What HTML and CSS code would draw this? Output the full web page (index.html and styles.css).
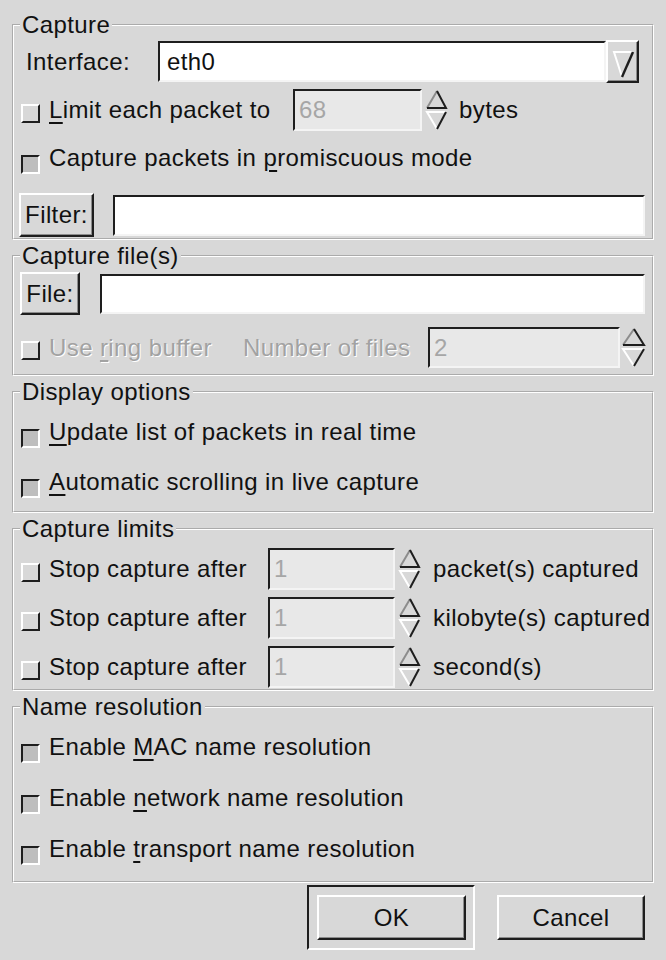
FILE: index.html
```html
<!DOCTYPE html>
<html lang="en">
<head>
    <meta charset="UTF-8">
    <title>Capture Options</title>
    <link rel="stylesheet" href="styles.css">
</head>
<body>
<div class="dialog">

    <fieldset class="frame capture-frame">
        <legend>Capture</legend>
        <div class="row iface-row">
            <span class="iface-label">Interface:</span>
            <div class="entry combo-entry">eth0</div>
            <div class="raised combo-btn">
                <svg width="29" height="39" viewBox="0 0 29 39">
                    <path d="M14 35 L6 10 H25" stroke="#fff" stroke-width="2" fill="none"/>
                    <path d="M25 10 L14 35" stroke="#1e1e1e" stroke-width="2.4" fill="none"/>
                </svg>
            </div>
        </div>
        <div class="row limit-row">
            <span class="check"></span>
            <span class="limit-label"><u>L</u>imit each packet to</span>
            <div class="entry off-entry limit-entry">68</div>
            <svg class="spin" width="24" height="42" viewBox="0 0 24 42">
                <path d="M3 19 L13 2" stroke="#8c8c8c" stroke-width="2" fill="none"/>
                <path d="M13 2 L22 19 H3" stroke="#1e1e1e" stroke-width="2" fill="none"/>
                <path d="M22 23 H3 L13 40" stroke="#fff" stroke-width="2" fill="none"/>
                <path d="M13 40 L22 23" stroke="#1e1e1e" stroke-width="2" fill="none"/>
            </svg>
            <span class="unit">bytes</span>
        </div>
        <div class="row promisc-row">
            <span class="check on"></span>
            <span>Capture packets in <u>p</u>romiscuous mode</span>
        </div>
        <div class="row filter-row">
            <button class="raised filter-btn">Filter:</button>
            <div class="entry filter-entry"></div>
        </div>
    </fieldset>

    <fieldset class="frame file-frame">
        <legend>Capture file(s)</legend>
        <div class="row file-row">
            <button class="raised file-btn">File:</button>
            <div class="entry file-entry"></div>
        </div>
        <div class="row ring-row">
            <span class="check"></span>
            <span class="off ring-label">Use <u>r</u>ing buffer</span>
            <span class="off files-label">Number of files</span>
            <div class="entry off-entry ring-entry">2</div>
            <svg class="spin ring-spin" width="26" height="41" viewBox="0 0 26 41">
                <path d="M3 18 L14 2" stroke="#8c8c8c" stroke-width="2" fill="none"/>
                <path d="M14 2 L24 18 H3" stroke="#1e1e1e" stroke-width="2" fill="none"/>
                <path d="M24 22 H3 L14 39" stroke="#fff" stroke-width="2" fill="none"/>
                <path d="M14 39 L24 22" stroke="#1e1e1e" stroke-width="2" fill="none"/>
            </svg>
        </div>
    </fieldset>

    <fieldset class="frame display-frame">
        <legend>Display options</legend>
        <div class="row check-row first">
            <span class="check on"></span>
            <span><u>U</u>pdate list of packets in real time</span>
        </div>
        <div class="row check-row">
            <span class="check on"></span>
            <span><u>A</u>utomatic scrolling in live capture</span>
        </div>
    </fieldset>

    <fieldset class="frame limits-frame">
        <legend>Capture limits</legend>
        <div class="row stop-row first">
            <span class="check"></span>
            <span class="stop-label">Stop capture after</span>
            <div class="entry off-entry stop-entry">1</div>
            <svg class="spin" width="24" height="42" viewBox="0 0 24 42">
                <path d="M3 19 L13 2" stroke="#8c8c8c" stroke-width="2" fill="none"/>
                <path d="M13 2 L22 19 H3" stroke="#1e1e1e" stroke-width="2" fill="none"/>
                <path d="M22 23 H3 L13 40" stroke="#fff" stroke-width="2" fill="none"/>
                <path d="M13 40 L22 23" stroke="#1e1e1e" stroke-width="2" fill="none"/>
            </svg>
            <span class="stop-unit">packet(s) captured</span>
        </div>
        <div class="row stop-row">
            <span class="check"></span>
            <span class="stop-label">Stop capture after</span>
            <div class="entry off-entry stop-entry">1</div>
            <svg class="spin" width="24" height="42" viewBox="0 0 24 42">
                <path d="M3 19 L13 2" stroke="#8c8c8c" stroke-width="2" fill="none"/>
                <path d="M13 2 L22 19 H3" stroke="#1e1e1e" stroke-width="2" fill="none"/>
                <path d="M22 23 H3 L13 40" stroke="#fff" stroke-width="2" fill="none"/>
                <path d="M13 40 L22 23" stroke="#1e1e1e" stroke-width="2" fill="none"/>
            </svg>
            <span class="stop-unit">kilobyte(s) captured</span>
        </div>
        <div class="row stop-row">
            <span class="check"></span>
            <span class="stop-label">Stop capture after</span>
            <div class="entry off-entry stop-entry">1</div>
            <svg class="spin" width="24" height="42" viewBox="0 0 24 42">
                <path d="M3 19 L13 2" stroke="#8c8c8c" stroke-width="2" fill="none"/>
                <path d="M13 2 L22 19 H3" stroke="#1e1e1e" stroke-width="2" fill="none"/>
                <path d="M22 23 H3 L13 40" stroke="#fff" stroke-width="2" fill="none"/>
                <path d="M13 40 L22 23" stroke="#1e1e1e" stroke-width="2" fill="none"/>
            </svg>
            <span class="stop-unit">second(s)</span>
        </div>
    </fieldset>

    <fieldset class="frame names-frame">
        <legend>Name resolution</legend>
        <div class="row name-row first">
            <span class="check on"></span>
            <span>Enable <u>M</u>AC name resolution</span>
        </div>
        <div class="row name-row">
            <span class="check on"></span>
            <span>Enable <u>n</u>etwork name resolution</span>
        </div>
        <div class="row name-row">
            <span class="check on"></span>
            <span>Enable <u>t</u>ransport name resolution</span>
        </div>
    </fieldset>

    <div class="actions">
        <div class="default-frame">
            <button class="raised action-btn ok-btn">OK</button>
        </div>
        <button class="raised action-btn cancel-btn">Cancel</button>
    </div>

</div>
</body>
</html>
```

FILE: styles.css
```css
body {
    margin: 0;
    background-color: #d8d8d8;
    color: #111;
    font-family: "Liberation Sans", Arial, sans-serif;
    font-size: 24px;
    letter-spacing: 0.4px;
    line-height: 28px;
}

.dialog {
    display: flex;
    flex-direction: column;
    gap: 2px;
    padding: 11px 12px 0 12px;
}

/* etched frames */
.frame {
    margin: 0;
    min-width: 0;
    border: 2px groove #fff;
    padding: 0 7px 0 6px;
}

legend {
    padding: 0 2px;
    height: 28px;
    line-height: 28px;
}

.row {
    display: flex;
    align-items: center;
}

.row > * {
    flex: none;
    white-space: nowrap;
}

u {
    text-decoration-thickness: 2px;
    text-underline-offset: 4px;
}

.off {
    color: #a2a2a2;
    text-shadow: 1px 1px 0 #fff;
}

/* widgets */
.check {
    box-sizing: border-box;
    width: 19px;
    height: 19px;
    margin: 6px 9px 0 1px;
    border: 2px solid;
    border-color: #fff #1e1e1e #1e1e1e #fff;
    background: #d8d8d8;
}

.check.on {
    margin-top: 12px;
    border-color: #1e1e1e #fff #fff #1e1e1e;
    background: #bebebe;
}

.entry {
    box-sizing: border-box;
    height: 41px;
    padding: 0 6px;
    border: 2px solid;
    border-color: #1e1e1e #f4f4f4 #f4f4f4 #1e1e1e;
    background: #fff;
    line-height: 37px;
}

.off-entry {
    padding: 0 4px;
    background: #e8e8e8;
    color: #a6a6a6;
}

.raised {
    box-sizing: border-box;
    margin: 0;
    padding: 0;
    border: 2px solid;
    border-color: #fff #1e1e1e #1e1e1e #fff;
    background: #d8d8d8;
    color: inherit;
    font: inherit;
    letter-spacing: inherit;
    box-shadow: inset -1px -1px 0 #8c8c8c;
}

.spin {
    margin-left: 2px;
}

/* Capture */
.iface-row {
    margin-top: 1px;
    height: 43px;
}

.iface-label {
    width: 132px;
    margin-left: 6px;
}

.combo-entry {
    width: 448px;
    padding-left: 7px;
}

.combo-btn {
    width: 33px;
    height: 43px;
}

.combo-btn svg {
    display: block;
}

.limit-row {
    margin-top: 6px;
    height: 42px;
}

.limit-label {
    width: 244px;
}

.limit-entry {
    width: 129px;
    height: 42px;
}

.unit {
    margin-left: 11px;
}

.promisc-row {
    margin-top: 7px;
    height: 40px;
}

.filter-row {
    margin-top: 15px;
    height: 44px;
}

.filter-btn {
    width: 75px;
    height: 44px;
    margin-left: -1px;
}

.row > .filter-entry {
    flex: 1;
    margin-left: 19px;
}

.capture-frame {
    padding-bottom: 1px;
}

/* Capture file(s) */
.file-row {
    margin-top: 2px;
    height: 43px;
}

.file-btn {
    width: 60px;
    height: 43px;
}

.row > .file-entry {
    flex: 1;
    height: 40px;
    margin-left: 20px;
}

.ring-row {
    margin-top: 12px;
    height: 41px;
}

.ring-label {
    width: 194px;
}

.files-label {
    width: 185px;
}

.ring-entry {
    width: 192px;
}

.ring-spin {
    margin-left: 0;
}

.file-frame {
    padding-bottom: 6px;
}

/* Display options */
.check-row {
    margin-top: 10px;
    height: 40px;
}

.check-row.first {
    margin-top: 6px;
}

.display-frame {
    padding-bottom: 9px;
}

/* Capture limits */
.stop-row {
    margin-top: 7px;
    height: 42px;
}

.stop-row.first {
    margin-top: 5px;
}

.stop-label {
    width: 219px;
}

.stop-entry {
    width: 127px;
    height: 42px;
}

.stop-unit {
    margin-left: 12px;
}

.limits-frame {
    padding-bottom: 1px;
}

/* Name resolution */
.name-row {
    margin-top: 11px;
    height: 40px;
}

.name-row.first {
    margin-top: 6px;
}

.names-frame {
    padding-bottom: 12px;
}

/* OK / Cancel */
.actions {
    display: flex;
    justify-content: flex-end;
    align-items: center;
    padding-right: 9px;
}

.default-frame {
    box-sizing: border-box;
    margin-right: 22px;
    padding: 8px 7px 8px 8px;
    border: 2px solid;
    border-color: #1e1e1e #fff #fff #1e1e1e;
}

.action-btn {
    display: block;
    height: 45px;
    text-align: center;
}

.ok-btn {
    width: 149px;
}

.cancel-btn {
    width: 148px;
}
```
